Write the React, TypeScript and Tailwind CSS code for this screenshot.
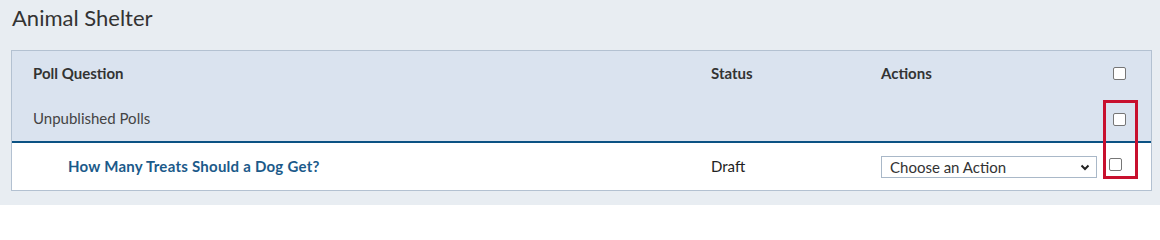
import React from 'react';

const Box: React.FC<{className?: string}> = ({className = ''}) => (
  <span className={`block w-[13px] h-[13px] rounded-[2px] border border-[#767676] bg-white ${className}`} />
);

const App: React.FC = () => {
  return (
    <div className="w-[1160px] h-[205px] bg-[#e8edf2] font-['Lato',sans-serif] text-[#333]">
      <div className="pl-[12px] pt-[5px] h-[50px]">
        <h1 className="text-[22px] leading-[26px] text-[#333]">Animal Shelter</h1>
      </div>
      <div className="relative ml-[11px] w-[1141px] border border-[#b3c1d1] bg-white">
        <div className="flex items-center h-[45px] pb-[1px] bg-[#dae3ef] text-[15px] font-bold text-[#333]">
          <div className="w-[699px] pl-[21px]">Poll Question</div>
          <div className="w-[170px]">Status</div>
          <div className="w-[232px]">Actions</div>
          <Box className="self-start mt-[16px]" />
        </div>
        <div className="flex items-center h-[47px] pb-[1px] bg-[#dae3ef] text-[15px] text-[#444] border-b-2 border-[#0b5283]">
          <div className="w-[1101px] pl-[21px]">Unpublished Polls</div>
          <Box className="self-start mt-[17px]" />
        </div>
        <div className="flex items-center h-[47px] text-[15px]">
          <div className="w-[699px] pl-[56px] font-bold tracking-[0.25px] text-[#1b5a8a]">How Many Treats Should a Dog Get?</div>
          <div className="w-[170px] text-[#222]">Draft</div>
          <div className="w-[228px] self-start mt-[13px]">
            <div className="flex items-center justify-between w-[216px] h-[22px] border border-[#a9b8c8] bg-white pl-[8px] pr-[6px] text-[15px] text-[#333]">
              <span>Choose an Action</span>
              <svg width="10" height="10" viewBox="0 0 10 10" className="text-[#222]">
                <path d="M1.5 3.5 L5 7 L8.5 3.5" fill="none" stroke="currentColor" strokeWidth="2" />
              </svg>
            </div>
          </div>
          <Box className="self-start mt-[15px]" />
        </div>
        <div className="absolute left-[1091px] top-[49px] w-[35px] h-[79px] border-[3px] border-[#c8102e]" />
      </div>
    </div>
  );
};

export default App;
